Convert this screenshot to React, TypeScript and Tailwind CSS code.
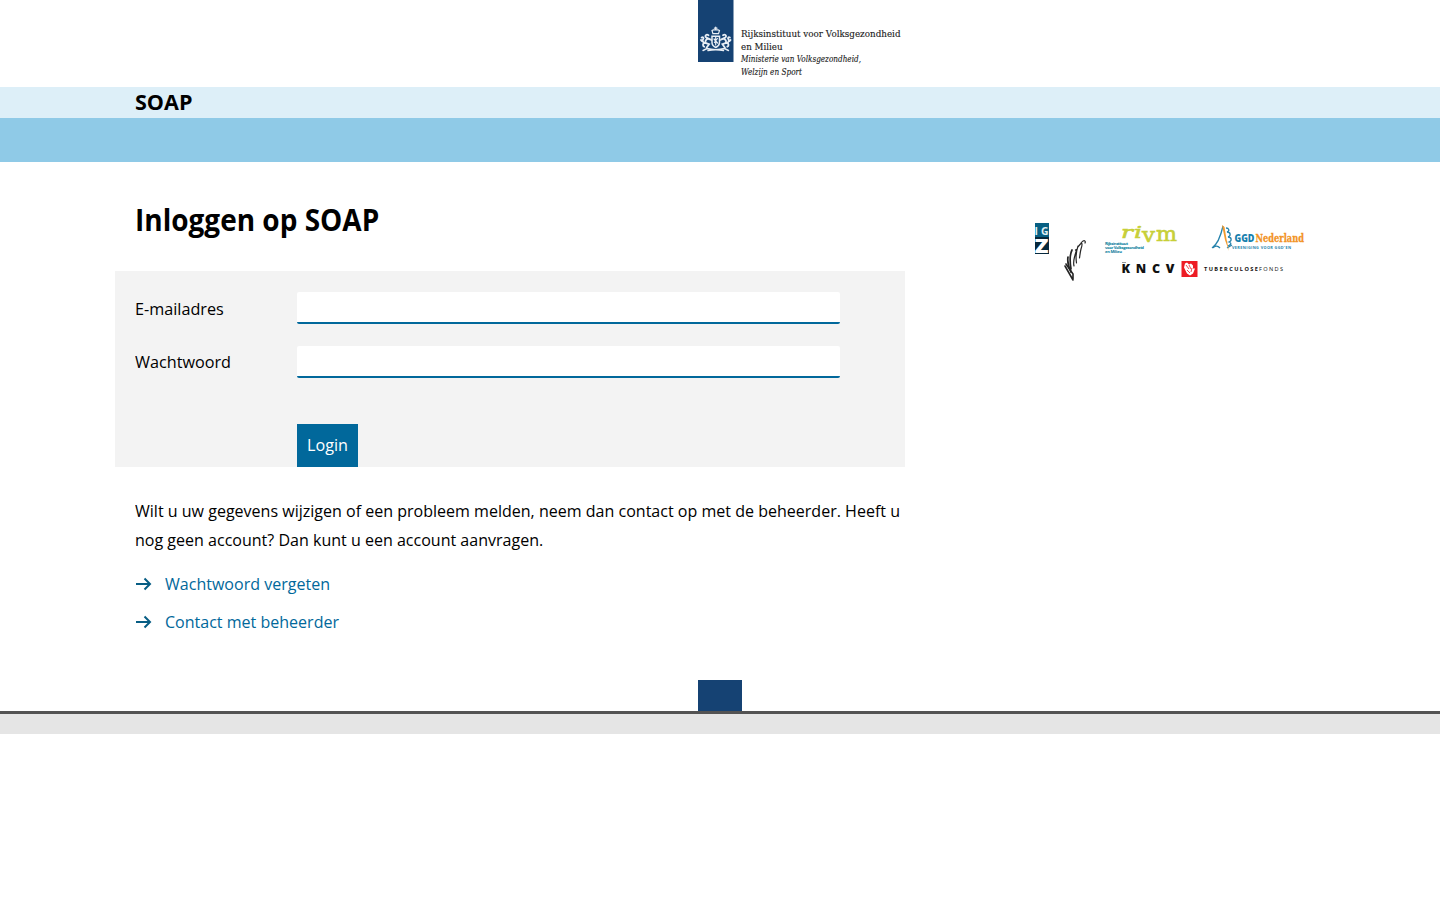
import React from "react";

const serif = "'DejaVu Serif', serif";
const sans = "'Open Sans', sans-serif";

function Crest() {
  return (
    <svg className="block h-[87px] w-[210px]" viewBox="0 0 210 87">
      <rect width="35.5" height="62" fill="#154273" />
      <g fill="none" stroke="#e8eef5" strokeWidth="1.2" strokeLinecap="round">
        <path d="M17.7 27v3M16.4 28.2h2.6M14 30.5c1.500-1.200 6-1.200 7.500 0l-1 3.200h-5.600z" />
        <path d="M14 36.200h7.500v6.300c0 2.500-1.800 4-3.700 5-2-1-3.800-2.500-3.800-5z" strokeWidth="1.500" />
        <path d="M16 39l3.500 4M19.400 38.500l-3 4M17.700 37v8" />
        <path d="M10.500 35.200c-2-1.400-4 .4-2.600 2l2.700 1.400c-3 .5-4 3-2.500 4.500l3 1.100-2.600 3.600M10.500 39l3 1M3.600 37.500c1.600-.8 2.400.4 1.600 1.400-1.200 1.800-.3 3.500 1.400 4.100-2.100.4-2.100 3-.4 3.700M4 41l-1-1" strokeWidth="1.800" />
        <path d="M25 35.200c2-1.400 4 .4 2.600 2l-2.700 1.400c3 .5 4 3 2.500 4.500l-3 1.100 2.600 3.600M25 39l-3 1M31.900 37.500c-1.600-.8-2.400.4-1.600 1.400 1.200 1.800.3 3.500-1.400 4.100 2.100.4 2.100 3 .4 3.700M31.500 41l1-1" strokeWidth="1.800" />
        <path d="M5 50.500l4-2c5 1.300 12.500 1.300 17.500 0l4 2M10 50.500c4-.8 11.500-.8 15.500 0" strokeWidth="1.400" />
      </g>
      <g fill="#222" stroke="#222" strokeWidth=".15" fontFamily={serif} fontSize="10">
        <text x="43" y="37" textLength="159.500" lengthAdjust="spacingAndGlyphs">Rijksinstituut voor Volksgezondheid</text>
        <text x="43" y="49.500" textLength="41.500" lengthAdjust="spacingAndGlyphs">en Milieu</text>
        <g fontStyle="italic">
          <text x="43" y="62" textLength="120" lengthAdjust="spacingAndGlyphs">Ministerie van Volksgezondheid,</text>
          <text x="43" y="74.500" textLength="61" lengthAdjust="spacingAndGlyphs">Welzijn en Sport</text>
        </g>
      </g>
    </svg>
  );
}

function PartnerLogos() {
  return (
    <svg className="block h-[66px] w-[285px]" viewBox="1035 220 285 66" fontFamily={sans}>
      <rect x="1035" y="223" width="14" height="14" fill="#075f83" />
      <rect x="1035" y="237" width="14" height="17" fill="#06283c" />
      <text x="1034.500" y="235" fontSize="10.500" fontWeight="700" fill="#e1f1f6">I</text>
      <text x="1041" y="235" fontSize="10.500" fontWeight="700" fill="#e1f1f6" textLength="7.500" lengthAdjust="spacingAndGlyphs">G</text>
      <text x="1034.500" y="252.500" fontSize="20" fontWeight="800" fill="#fff" textLength="14" lengthAdjust="spacingAndGlyphs">Z</text>
      <g fill="none" stroke="#252525" strokeLinecap="round">
        <path d="M1065 266l8 14M1066 264l7 10v5" strokeWidth="1.600" />
        <path d="M1068 257c-1 6 1 11 3 15M1072 250c-3 6-2 13-1 19" strokeWidth="1.700" />
        <path d="M1075.500 250c2-2 0 3-1 7s-1 7-.5 9M1078 246c-2 6-2 14-1.500 17M1078 247c4-6 5-4 3 2-1 4-1 6-1.500 9M1081 243c3-4 5-2 4 0" strokeWidth="1.200" />
      </g>
      <g fontFamily={serif} fill="#c7cf38" stroke="#c7cf38" strokeWidth=".6">
        <text x="1121" y="238" fontSize="17" fontStyle="italic" textLength="12" lengthAdjust="spacingAndGlyphs">r</text>
        <text x="1134" y="238" fontSize="17" fontStyle="italic" textLength="8" lengthAdjust="spacingAndGlyphs">i</text>
        <text x="1142" y="242" fontSize="21" textLength="13" lengthAdjust="spacingAndGlyphs">v</text>
        <text x="1156" y="241" fontSize="20" textLength="21" lengthAdjust="spacingAndGlyphs">m</text>
      </g>
      <g fill="#087d9e" fontSize="4.200" fontWeight="700">
        <text x="1105" y="245" textLength="23">Rijksinstituut</text>
        <text x="1105" y="249" textLength="39">voor Volksgezondheid</text>
        <text x="1105" y="253" textLength="17">en Milieu</text>
      </g>
      <g fill="none" stroke="#2683ac" strokeWidth="1.300">
        <path d="M1212 248c6-4 9-13 11-22M1213 248c2-3 5-2 7 0M1227 248l5-3" />
        <path d="M1226 228c3 0 4 3 1 4 4 0 4 4 1 5 4 0 4 4 1 5 3 1 2 3-1 4" />
      </g>
      <path d="M1222 225l2.500 2 2 12 2.500 12-4-11z" fill="#f29a2e" />
      <text x="1234.500" y="242" fontSize="10.500" fontWeight="800" fill="#1680ad" textLength="20" lengthAdjust="spacingAndGlyphs">GGD</text>
      <text x="1255.500" y="242" fontFamily={serif} fontSize="10.500" fontWeight="700" fill="#f29325" stroke="#f29325" strokeWidth=".3" textLength="48.500" lengthAdjust="spacingAndGlyphs">Nederland</text>
      <text x="1232" y="248.500" fontSize="3.800" fontWeight="700" fill="#2683ac" textLength="59">VERENIGING VOOR GGD'EN</text>
      <g fill="#111" fontWeight="800">
        <text x="1121.500" y="273.300" fontSize="12.500" textLength="53">KNCV</text>
        <text x="1204" y="270.700" fontSize="5.600" textLength="54" fontWeight="700">TUBERCULOSE</text>
        <text x="1259" y="270.700" fontSize="5.600" textLength="24" fontWeight="400">FONDS</text>
      </g>
      <path d="M1122 262.500h4" stroke="#999" />
      <rect x="1181.500" y="261" width="16" height="16" fill="#ed1c24" />
      <path d="M1185 263.500l2-1 2 2 2-1 2 2v3l2 0-2 5-3 2-3-2-3-6z" fill="#fff" />
      <path d="M1186 265l3 4m0-4l2 4m-4 1l3 3m2-5l-1 4" stroke="#ed1c24" strokeWidth=".8" />
    </svg>
  );
}

function Field({ label, name, type }: { label: string; name: string; type: string }) {
  return (
    <div className="flex h-8">
      <label htmlFor={name} className={`w-[162px] leading-[29px] ${name === "email" ? "pt-[2px]" : "pt-px"}`}>
        <span className="inline-block origin-left scale-x-[0.953]">{label}</span>
      </label>
      <input id={name} type={type} className="h-8 w-[543px] rounded-[2px] border-b-2 border-[#01689b] bg-white px-2 outline-none" />
    </div>
  );
}

function ArrowLink({ children }: { children: React.ReactNode }) {
  return (
    <li className="flex h-[38px] items-center text-[#01689b]">
      <svg className="mr-[13px] block h-4 w-[17px]" viewBox="0 0 17 16" fill="none" stroke="#075d84" strokeWidth="2">
        <path d="M1 8h14M9.500 2.500l5.500 5.500-5.500 5.500" />
      </svg>
      <a href="#" className="origin-left scale-x-[0.943]">{children}</a>
    </li>
  );
}

export default function App() {
  return (
    <div className="min-h-screen bg-white font-['Open_Sans',sans-serif] text-[17px] text-black">
      <header className="h-[87px] pl-[698px]">
        <Crest />
      </header>
      <div className="h-[31px] bg-[#ddeff8] pl-[135px] text-[22px] leading-[28px] font-bold">
        <span className="inline-block origin-left scale-x-[0.98]">SOAP</span>
      </div>
      <nav className="h-[44px] bg-[#8fcae7]" />
      <div className="flex h-[518px] pl-[115px]">
        <main className="w-[790px]">
          <h1 className="h-[109px] pt-[37px] pl-5 text-[30px] leading-[42px] font-bold">
            <span className="inline-block origin-left scale-x-[0.933]">Inloggen op SOAP</span>
          </h1>
          <form className="h-[196px] bg-[#f3f3f3] pt-[21px] pl-5" onSubmit={(e) => e.preventDefault()}>
            <div className="flex flex-col gap-[22px]">
              <Field label="E-mailadres" name="email" type="text" />
              <Field label="Wachtwoord" name="password" type="password" />
            </div>
            <button className="mt-[46px] ml-[162px] h-[43px] w-[61px] bg-[#01689b] pb-[2px] text-white">
              <span className="inline-block scale-x-[0.95]">Login</span>
            </button>
          </form>
          <p className="mt-[29px] ml-5 w-max origin-left scale-x-[0.943] leading-[29px] whitespace-nowrap">
            Wilt u uw gegevens wijzigen of een probleem melden, neem dan contact op met de beheerder. Heeft u
            <br />
            nog geen account? Dan kunt u een account aanvragen.
          </p>
          <ul className="mt-[11px] pl-5">
            <ArrowLink>Wachtwoord vergeten</ArrowLink>
            <ArrowLink>Contact met beheerder</ArrowLink>
          </ul>
        </main>
        <aside className="ml-[130px] pt-[58px]">
          <PartnerLogos />
        </aside>
      </div>
      <footer>
        <div className="mx-auto h-[31px] w-[44px] bg-[#154273]" />
        <div className="h-[23px] border-t-[3px] border-[#535353] bg-[#e5e5e5]" />
      </footer>
    </div>
  );
}
